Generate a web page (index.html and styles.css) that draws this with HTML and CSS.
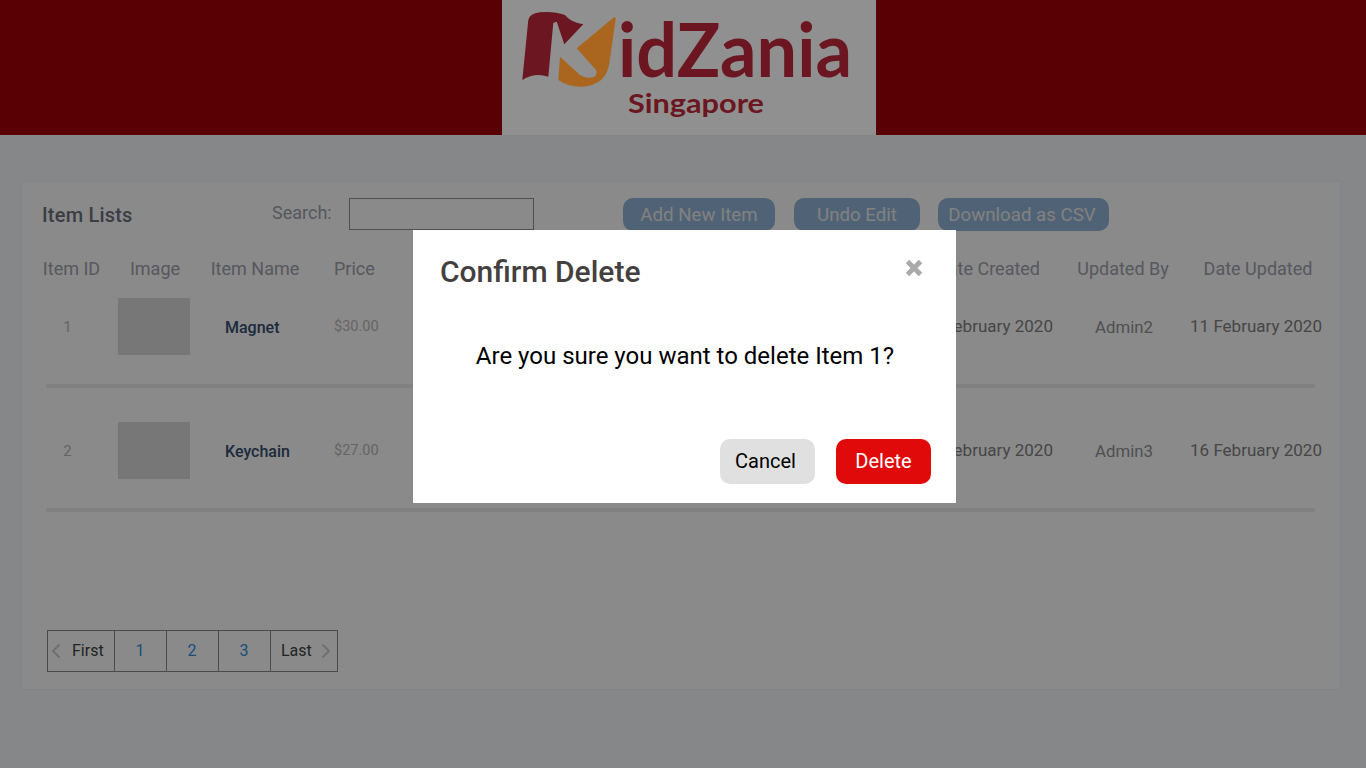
FILE: index.html
```html
<!DOCTYPE html>
<html lang="en">
<head>
    <meta charset="UTF-8">
    <meta name="viewport" content="width=device-width, initial-scale=1.0">
    <title>KidZania Singapore - Item Lists</title>
    <link rel="stylesheet" href="styles.css">
</head>
<body>
    <header class="site-header">
        <div class="logo-box">
            <svg class="logo" viewBox="0 0 374 135" width="374" height="135" role="img" aria-label="KidZania Singapore">
                <path class="logo-red" d="M20.3 80 L26.3 20 Q27 14 38 12.3 Q52 11 63 15 Q68 22 81.3 24.3 L62.3 44.3 L54.7 21.7 L51.3 23 L46.3 76.7 Q33 72 20.3 80Z"/>
                <path class="logo-orange" d="M112.3 17 Q114 17 113.5 20 L107.5 62 Q105 85 80 86.7 Q66 87 56.3 80 L58 56.7 L78 75 Q84 79 92 77 Q96 74 94 70 L74.7 48.3Z"/>
                <text class="logo-name" x="116" y="77" textLength="234" lengthAdjust="spacingAndGlyphs">idZania</text>
                <text class="logo-place" x="126" y="113" textLength="136" lengthAdjust="spacingAndGlyphs">Singapore</text>
            </svg>
        </div>
    </header>

    <main class="card">
        <div class="toolbar">
            <h2 class="card-title">Item Lists</h2>
            <label class="search-label" for="searchInput">Search:</label>
            <input class="search-input" type="text" id="searchInput">
            <div class="button-group">
                <button class="btn-blue btn-add">Add New Item</button>
                <button class="btn-blue btn-undo">Undo Edit</button>
                <button class="btn-blue btn-csv">Download as CSV</button>
            </div>
        </div>

        <div class="item-grid head-row">
            <div>Item ID</div>
            <div class="head-nudge">Image</div>
            <div>Item Name</div>
            <div class="col-price">Price</div>
            <div></div>
            <div class="head-nudge">Date Created</div>
            <div class="head-nudge">Updated By</div>
            <div>Date Updated</div>
        </div>

        <div class="item-grid item-row">
            <div class="cell-id">1</div>
            <div class="thumb"></div>
            <div class="cell-name">Magnet</div>
            <div class="cell-price">$30.00</div>
            <div></div>
            <div class="cell-date">11 February 2020</div>
            <div class="cell-admin">Admin2</div>
            <div class="cell-date cell-last">11 February 2020</div>
        </div>
        <div class="divider"></div>

        <div class="item-grid item-row">
            <div class="cell-id">2</div>
            <div class="thumb"></div>
            <div class="cell-name">Keychain</div>
            <div class="cell-price">$27.00</div>
            <div></div>
            <div class="cell-date">16 February 2020</div>
            <div class="cell-admin">Admin3</div>
            <div class="cell-date cell-last">16 February 2020</div>
        </div>
        <div class="divider"></div>

        <nav class="pager">
            <a class="pager-end pager-first">
                <svg class="chevron" viewBox="0 0 10 16" width="10" height="16"><path d="M8.5 1.5 L2 8 L8.5 14.5"/></svg>
                First
            </a>
            <a class="pager-num">1</a>
            <a class="pager-num">2</a>
            <a class="pager-num">3</a>
            <a class="pager-end pager-last">
                Last
                <svg class="chevron" viewBox="0 0 10 16" width="10" height="16"><path d="M1.5 1.5 L8 8 L1.5 14.5"/></svg>
            </a>
        </nav>
    </main>

    <div class="overlay">
        <div class="modal">
            <div class="modal-head">
                <h3 class="modal-title">Confirm Delete</h3>
                <svg class="modal-close" viewBox="0 0 18 18" width="18" height="18"><path d="M2.5 2.5 L15.5 15.5 M15.5 2.5 L2.5 15.5"/></svg>
            </div>
            <p class="modal-text">Are you sure you want to delete Item 1?</p>
            <div class="modal-foot">
                <button class="btn-modal btn-cancel">Cancel</button>
                <button class="btn-modal btn-delete">Delete</button>
            </div>
        </div>
    </div>
</body>
</html>
```

FILE: styles.css
```css
* {
    box-sizing: border-box;
}
body {
    font-family: Roboto, 'Liberation Sans', sans-serif;
    background-color: #f6f9fe;
    margin: 0;
    padding: 0;
    height: 768px;
    overflow: hidden;
}

/* header sits above the overlay */
.site-header {
    position: relative;
    z-index: 2;
    height: 135px;
    background-color: #590005;
    display: flex;
    justify-content: center;
}
.logo-box {
    width: 374px;
    margin-left: 12px;
    background-color: #909090;
}
.logo {
    display: block;
}
.logo-red {
    fill: #6b1620;
}
.logo-orange {
    fill: #aa661e;
}
.logo-name {
    fill: #6b1620;
    font-family: Lato, sans-serif;
    font-weight: 700;
    font-size: 75px;
}
.logo-place {
    fill: #6b1620;
    font-family: Lato, sans-serif;
    font-weight: 700;
    font-size: 26px;
}

.card {
    width: 1318px;
    height: 507px;
    margin: 47px 0 0 22px;
    padding-top: 16px;
    background-color: #ffffff;
    box-shadow: 0 0 3px rgba(0, 0, 0, 0.06);
}
.toolbar {
    display: flex;
    align-items: center;
    height: 33px;
    padding-left: 20px;
}
.card-title {
    width: 230px;
    margin: 0;
    font-size: 20px;
    letter-spacing: 0.2px;
    font-weight: 500;
    color: #6b7280;
}
.search-label {
    width: 77px;
    margin-top: -5px;
    font-size: 18px;
    color: #a0a3b0;
}
.search-input {
    width: 185px;
    height: 32px;
    margin-top: -1px;
    border: 1px solid #949494;
    background: #ffffff;
}
.button-group {
    display: flex;
    margin-left: 89px;
}
.btn-blue {
    height: 33px;
    padding: 0;
    border: none;
    border-radius: 10px;
    background-color: #94b6d8;
    color: #eeeeee;
    font-family: inherit;
    font-size: 18.7px;
}
.btn-add {
    width: 152px;
    margin-right: 19px;
}
.btn-undo {
    width: 126px;
    margin-right: 18px;
}
.btn-csv {
    width: 171px;
    padding-right: 3px;
}

.item-grid {
    display: grid;
    grid-template-columns: 79px 86px 116px 100px 507px 134px 136px 136px;
    margin-left: 10px;
    text-align: center;
}
.head-row {
    height: 24px;
    margin-top: 26px;
    margin-bottom: 17px;
    line-height: 24px;
    font-size: 18px;
    color: #a0a3b0;
}
.head-nudge {
    padding-left: 2px;
}
.col-price {
    text-align: left;
    padding-left: 21px;
}
.item-row {
    align-items: center;
    height: 57px;
}
.thumb {
    width: 72px;
    height: 57px;
    margin-left: 7px;
    background-color: #dcdcdc;
}
.cell-id {
    padding-right: 8px;
    font-size: 15px;
    color: #b9b9b9;
}
.cell-name {
    text-align: left;
    padding: 2px 0 0 28px;
    font-size: 16px;
    font-weight: 500;
    color: #374e6f;
}
.cell-price {
    text-align: left;
    padding-left: 21px;
    font-size: 14.5px;
    color: #bbbbbb;
}
.cell-date {
    margin-top: -2px;
    font-size: 17px;
    color: #828282;
}
.cell-last {
    padding-right: 4px;
}
.cell-admin {
    padding-left: 4px;
    font-size: 16.8px;
    color: #949494;
}
.divider {
    width: 1269px;
    height: 4px;
    margin: 29px 0 34px 24px;
    background-color: #eeeeee;
}

.pager {
    display: flex;
    width: 291px;
    height: 42px;
    margin: 118px 0 0 25px;
    border: 1px solid #8b8b8b;
}
.pager a {
    display: flex;
    align-items: center;
    padding-bottom: 2px;
    font-size: 16px;
    color: #414141;
}
.pager-num {
    justify-content: center;
    width: 52px;
    padding-right: 1px;
    border-left: 1px solid #8b8b8b;
}
.pager .pager-num {
    color: #3090e0;
}
.pager-first {
    width: 66px;
    gap: 11px;
    padding-left: 3px;
}
.pager-last {
    width: 67px;
    gap: 9px;
    padding-left: 10px;
    border-left: 1px solid #8b8b8b;
}
.chevron {
    margin-top: 2px;
}
.chevron path {
    fill: none;
    stroke: #cccccc;
    stroke-width: 1.8;
}

/* dialog */
.overlay {
    position: fixed;
    top: 0;
    right: 0;
    bottom: 0;
    left: 0;
    z-index: 1;
    padding: 230px 0 0 413px;
    background-color: rgba(0, 0, 0, 0.46);
}
.modal {
    width: 543px;
    height: 273px;
    padding: 23px 25px 19px 27px;
    background-color: #ffffff;
}
.modal-head {
    display: flex;
    justify-content: space-between;
    align-items: flex-start;
}
.modal-title {
    margin: 0;
    font-size: 30px;
    line-height: 38px;
    font-weight: 500;
    color: #444040;
}
.modal-close {
    margin: 6px 8px 0 0;
}
.modal-close path {
    fill: none;
    stroke: #aaaaaa;
    stroke-width: 5;
}
.modal-text {
    margin: 50px 1px 0 0;
    text-align: center;
    font-size: 24px;
    line-height: 30px;
    color: #000000;
}
.modal-foot {
    display: flex;
    justify-content: flex-end;
    gap: 21px;
    margin-top: 68px;
}
.btn-modal {
    width: 95px;
    height: 45px;
    border: none;
    border-radius: 10px;
    font-family: inherit;
    font-size: 20px;
}
.btn-cancel {
    padding: 0 4px 2px 0;
    background-color: #e0e0e0;
    color: #000000;
}
.btn-delete {
    padding: 0 0 2px;
    background-color: #e00a0a;
    color: #ffffff;
}
```
